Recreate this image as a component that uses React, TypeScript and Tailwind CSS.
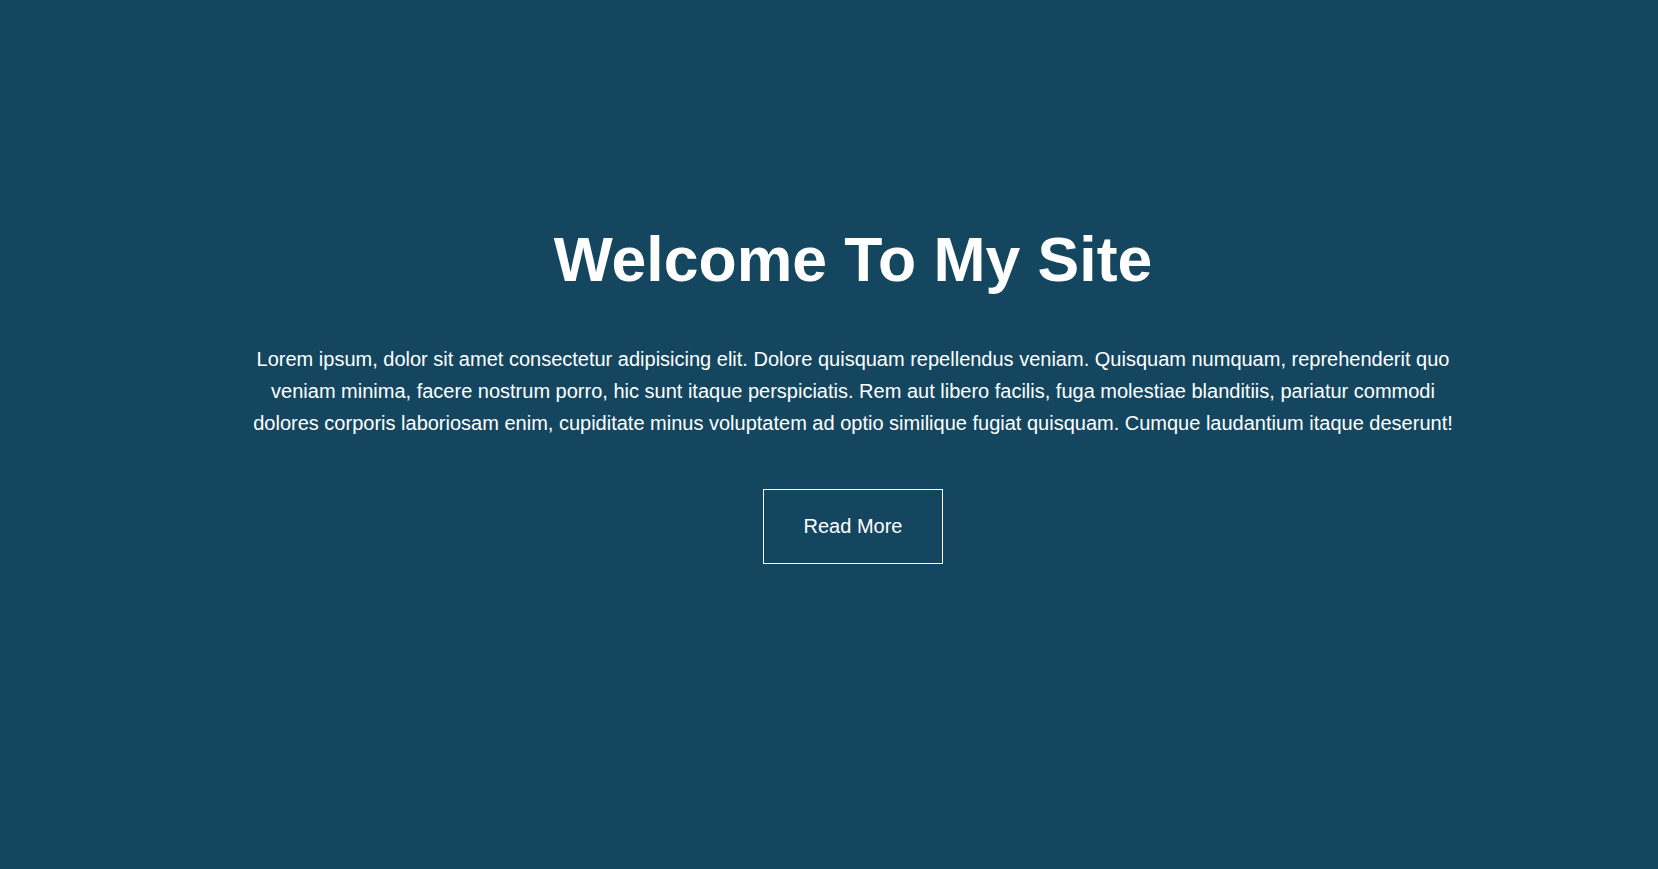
import React from "react";

export default function App() {
  return (
    <div
      className="flex min-h-screen w-full flex-col items-center bg-[#14475f] pl-12 pt-[223px] text-white"
      style={{ fontFamily: '"Liberation Sans", Arial, sans-serif' }}
    >
      <h1 className="text-[62.5px] font-bold leading-[72px]">Welcome To My Site</h1>

      <p className="mt-12 w-[1200px] text-center text-[20px] leading-[32px]">
        Lorem ipsum, dolor sit amet consectetur adipisicing elit. Dolore quisquam repellendus veniam. Quisquam
        numquam, reprehenderit quo veniam minima, facere nostrum porro, hic sunt itaque perspiciatis. Rem aut
        libero facilis, fuga molestiae blanditiis, pariatur commodi dolores corporis laboriosam enim, cupiditate
        minus voluptatem ad optio similique fugiat quisquam. Cumque laudantium itaque deserunt!
      </p>

      <button className="mt-[50px] border border-white px-10 py-6 text-[20px] leading-[25px] text-white">
        Read More
      </button>
    </div>
  );
}
